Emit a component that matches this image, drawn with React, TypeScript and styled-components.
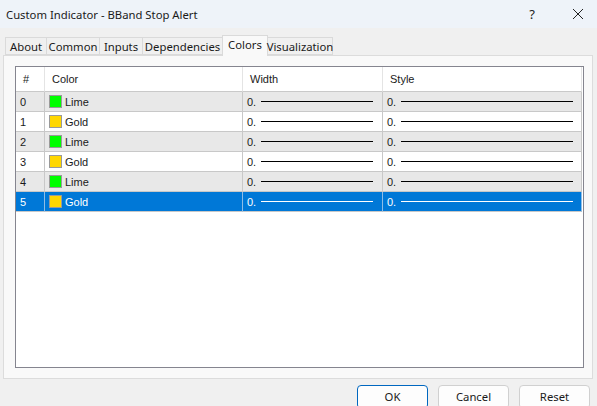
import React from "react";
import styled, { createGlobalStyle } from "styled-components";

const GlobalStyle = createGlobalStyle`
  html, body {
    margin: 0;
    padding: 0;
    background: #f0f0f0;
    font-family: "Noto Sans", "Open Sans", sans-serif;
    overflow: hidden;
  }
`;

const Window = styled.div`
  width: 597px;
  height: 406px;
  display: flex;
  flex-direction: column;
  background: #f0f0f0;
  overflow: hidden;
`;

const TitleBar = styled.div`
  height: 28px;
  flex: none;
  display: flex;
  align-items: center;
  background: #eef3f9;
  padding-left: 6px;
  font-size: 11.3px;
  color: #1a1a1a;
`;

const TitleText = styled.div`
  flex: 1;
`;

const TitleButton = styled.div<{ $w: number }>`
  width: ${(p) => p.$w}px;
  height: 28px;
  display: flex;
  align-items: center;
  justify-content: center;
  color: #222;
  font-size: 13px;
`;

const Content = styled.div`
  padding: 7px 4px 0 3px;
  display: flex;
  flex-direction: column;
`;

const TabStrip = styled.div`
  height: 20px;
  display: flex;
  align-items: flex-end;
  padding-left: 2px;
  position: relative;
  z-index: 1;
`;

const Tab = styled.div<{ $active?: boolean; $w: number }>`
  box-sizing: border-box;
  width: ${(p) => p.$w}px;
  height: ${(p) => (p.$active ? 21 : 18)}px;
  margin-bottom: ${(p) => (p.$active ? -1 : 0)}px;
  border: 1px solid #dadada;
  border-bottom: ${(p) => (p.$active ? "none" : "1px solid #dadada")};
  margin-left: -1px;
  background: ${(p) => (p.$active ? "#f9f9f9" : "#f0f0f0")};
  font-size: 11.3px;
  color: #1a1a1a;
  display: flex;
  align-items: ${(p) => (p.$active ? "flex-start" : "center")};
  padding-top: ${(p) => (p.$active ? 1 : 0)}px;
  justify-content: center;
  &:first-child {
    margin-left: 0;
  }
`;

const Panel = styled.div`
  box-sizing: border-box;
  height: 324px;
  background: #f9f9f9;
  border: 1px solid #dcdcdc;
  padding: 10px 8px 10px 11px;
  display: flex;
`;

const Table = styled.div`
  flex: 1;
  background: #fff;
  border: 1px solid #85858f;
  font-family: "Liberation Sans", Arial, sans-serif;
  font-size: 11px;
  color: #1a1a1a;
`;

const Grid = styled.div`
  display: grid;
  grid-template-columns: 29px 198px 140px 199px;
`;

const HeadCell = styled.div`
  height: 24px;
  border-right: 1px solid #e4e4e4;
  border-bottom: 1px solid #c9c9c9;
  display: flex;
  align-items: center;
  padding-left: 7px;
  background: #fff;
`;

const Cell = styled.div<{ $bg: string; $sel?: boolean }>`
  box-sizing: border-box;
  height: 20px;
  background: ${(p) => p.$bg};
  color: ${(p) => (p.$sel ? "#fff" : "#1a1a1a")};
  border-right: 1px solid ${(p) => (p.$sel ? "#8fbde6" : "#c8c8c8")};
  border-bottom: 1px solid #c8c8c8;
  display: flex;
  align-items: center;
  padding-left: 4px;
`;

const Swatch = styled.span<{ $c: string }>`
  box-sizing: border-box;
  width: 13px;
  height: 13px;
  border: 1px solid #9a9a9a;
  background: ${(p) => p.$c};
  margin-right: 3px;
  flex: none;
`;

const LineVal = styled.span`
  width: 13px;
  flex: none;
`;

const Line = styled.span<{ $sel?: boolean; $w: number }>`
  width: ${(p) => p.$w}px;
  height: 1px;
  background: ${(p) => (p.$sel ? "#fff" : "#000")};
  margin-left: 1px;
`;

const Footer = styled.div`
  display: flex;
  justify-content: flex-end;
  gap: 10px;
  padding: 6px 3px 0 0;
`;

const Button = styled.button<{ $primary?: boolean }>`
  box-sizing: border-box;
  width: 71px;
  height: 24px;
  border-radius: 4px;
  border: 1px solid ${(p) => (p.$primary ? "#0067c0" : "#d0d0d0")};
  background: #fdfdfd;
  font-family: "Noto Sans", "Open Sans", sans-serif;
  font-size: 11.3px;
  color: #1a1a1a;
  padding: 0;
  padding-bottom: 2px;
`;

const tabs = [
  { label: "About", w: 42 },
  { label: "Common", w: 54 },
  { label: "Inputs", w: 44 },
  { label: "Dependencies", w: 81 },
  { label: "Colors", w: 46, active: true },
  { label: "Visualization", w: 66 },
];

const rows = [
  { n: 0, name: "Lime", c: "#00ff00" },
  { n: 1, name: "Gold", c: "#ffd700" },
  { n: 2, name: "Lime", c: "#00ff00" },
  { n: 3, name: "Gold", c: "#ffd700" },
  { n: 4, name: "Lime", c: "#00ff00" },
  { n: 5, name: "Gold", c: "#ffd700" },
];

export default function App() {
  return (
    <Window>
      <GlobalStyle />
      <TitleBar>
        <TitleText>Custom Indicator - BBand Stop Alert</TitleText>
        <TitleButton $w={54}>?</TitleButton>
        <TitleButton $w={38}>
          <svg width="12" height="12" viewBox="0 0 12 12">
            <path d="M1 1L11 11M11 1L1 11" stroke="#222" strokeWidth="1" />
          </svg>
        </TitleButton>
      </TitleBar>
      <Content>
        <TabStrip>
          {tabs.map((t) => (
            <Tab key={t.label} $w={t.w} $active={t.active}>
              {t.label}
            </Tab>
          ))}
        </TabStrip>
        <Panel>
          <Table>
            <Grid>
              <HeadCell>#</HeadCell>
              <HeadCell>Color</HeadCell>
              <HeadCell>Width</HeadCell>
              <HeadCell>Style</HeadCell>
              {rows.map((r) => {
                const sel = r.n === 5;
                const bg = sel ? "#0078d7" : r.n % 2 === 0 ? "#e8e8e8" : "#ffffff";
                return (
                  <React.Fragment key={r.n}>
                    <Cell $bg={bg} $sel={sel}>{r.n}</Cell>
                    <Cell $bg={bg} $sel={sel}>
                      <Swatch $c={r.c} />
                      {r.name}
                    </Cell>
                    <Cell $bg={bg} $sel={sel}>
                      <LineVal>0.</LineVal>
                      <Line $sel={sel} $w={112} />
                    </Cell>
                    <Cell $bg={bg} $sel={sel}>
                      <LineVal>0.</LineVal>
                      <Line $sel={sel} $w={172} />
                    </Cell>
                  </React.Fragment>
                );
              })}
            </Grid>
          </Table>
        </Panel>
        <Footer>
          <Button $primary>OK</Button>
          <Button>Cancel</Button>
          <Button>Reset</Button>
        </Footer>
      </Content>
    </Window>
  );
}
